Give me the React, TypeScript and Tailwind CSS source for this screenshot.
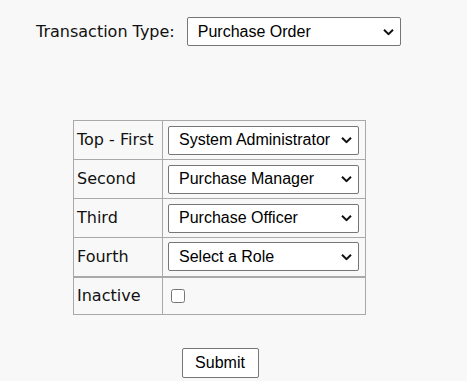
import React from "react";

const labelFont = { fontFamily: '"DejaVu Sans", Tahoma, sans-serif' };

function Chevron() {
  return (
    <svg
      className="absolute right-[7px] top-1/2 -translate-y-1/2 pointer-events-none"
      width="11"
      height="7"
      viewBox="0 0 11 7"
    >
      <path d="M1 1.2 L5.5 5.6 L10 1.2" fill="none" stroke="#111" strokeWidth="2" />
    </svg>
  );
}

function Sel({ value, width }: { value: string; width: string }) {
  return (
    <div className={"relative " + width}>
      <select
        defaultValue={value}
        className="appearance-none w-full h-[29px] bg-white border border-[#767676] rounded-[2px] pl-[10px] text-[16px] text-black font-['Liberation_Sans',Arial,sans-serif] outline-none"
      >
        <option>{value}</option>
      </select>
      <Chevron />
    </div>
  );
}

export default function App() {
  const rows = [
    { label: "Top - First", value: "System Administrator" },
    { label: "Second", value: "Purchase Manager" },
    { label: "Third", value: "Purchase Officer" },
    { label: "Fourth", value: "Select a Role" },
  ];
  return (
    <div className="w-[467px] h-[381px] bg-[#f8f8f8] text-black overflow-hidden">
      <div className="flex items-center pl-[36px] pt-[17px] gap-[12px]">
        <span className="text-[16px] leading-[29px] text-[#111]" style={labelFont}>
          Transaction Type:
        </span>
        <Sel value="Purchase Order" width="w-[214px]" />
      </div>

      <div className="ml-[73px] mt-[74px] w-[293px]">
        <table className="border-collapse w-[293px] text-[16px] text-[#111]" style={labelFont}>
          <tbody>
            {rows.map((r, i) => (
              <tr key={r.label} className={i === 3 ? "border-b-2 border-[#a9a9a9]" : ""}>
                <td className="border border-[#a9a9a9] w-[89px] h-[39px] pl-[3px] p-0 align-middle whitespace-nowrap">
                  {r.label}
                </td>
                <td className="border border-[#a9a9a9] h-[39px] px-[5px] align-middle">
                  <div className="flex items-center">
                    <Sel value={r.value} width="w-[191px]" />
                  </div>
                </td>
              </tr>
            ))}
            <tr>
              <td className="border border-[#a9a9a9] w-[89px] h-[38px] pl-[3px] p-0 align-middle">
                Inactive
              </td>
              <td className="border border-[#a9a9a9] h-[38px] px-[8px] align-middle">
                <div className="flex items-center">
                  <input type="checkbox" className="w-[14px] h-[14px] m-0" />
                </div>
              </td>
            </tr>
          </tbody>
        </table>
      </div>

      <div className="flex justify-center w-[440px] mt-[33px]">
        <button className="w-[77px] h-[30px] bg-white border border-[#767676] rounded-[2px] text-[16px] text-black font-['Liberation_Sans',Arial,sans-serif]">
          Submit
        </button>
      </div>
    </div>
  );
}
